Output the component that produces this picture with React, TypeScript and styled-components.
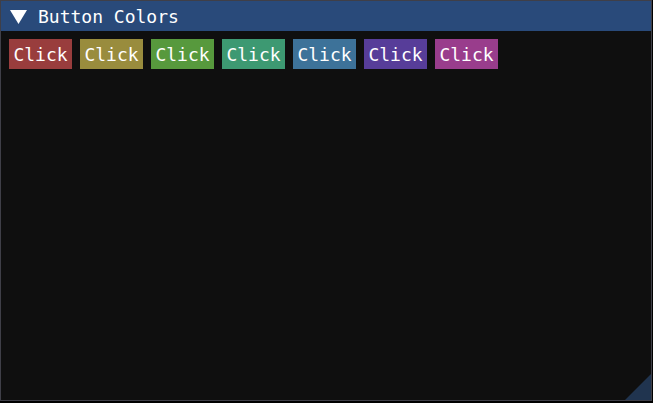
import React from "react";
import styled, { createGlobalStyle } from "styled-components";

const Global = createGlobalStyle`
  html, body { margin: 0; padding: 0; background: #000; }
  body { width: 653px; height: 403px; overflow: hidden; }
`;

const Window = styled.div`
  position: relative;
  box-sizing: border-box;
  width: 652px;
  height: 401px;
  background: #0f0f0f;
  border: 1px solid #3f3f48;
  display: flex;
  flex-direction: column;
  font-family: "DejaVu Sans Mono", "Liberation Mono", monospace;
  font-size: 18px;
  color: #ffffff;
`;

const TitleBar = styled.div`
  height: 30px;
  background: #294a7a;
  display: flex;
  align-items: center;
  padding-left: 9px;
  gap: 11px;
  flex-shrink: 0;
`;

const Arrow = styled.svg`
  width: 17px;
  height: 14px;
  display: block;
  margin-top: 1px;
`;

const Title = styled.span`
  line-height: 30px;
  padding-top: 2px;
  white-space: pre;
`;

const Content = styled.div`
  display: flex;
  gap: 8px;
  padding: 8px 8px;
`;

const ColorButton = styled.div<{ $bg: string }>`
  width: 63px;
  height: 30px;
  background: ${(p) => p.$bg};
  display: flex;
  align-items: center;
  justify-content: center;
  line-height: 30px;
  padding-top: 2px;
  box-sizing: border-box;
`;

const Grip = styled.svg`
  position: absolute;
  right: 0;
  bottom: 0;
  width: 26px;
  height: 26px;
  display: block;
`;

const colors = ["#993d3d", "#998c3d", "#57993d", "#3d9972", "#3d7299", "#573d99", "#993d8c"];

export default function App() {
  return (
    <>
      <Global />
      <Window>
        <TitleBar>
          <Arrow viewBox="0 0 17 14">
            <polygon points="0,0 17,0 8.5,14" fill="#ffffff" />
          </Arrow>
          <Title>Button Colors</Title>
        </TitleBar>
        <Content>
          {colors.map((c, i) => (
            <ColorButton key={i} $bg={c}>Click</ColorButton>
          ))}
        </Content>
        <Grip viewBox="0 0 26 26">
          <polygon points="26,0 26,26 0,26" fill="#20344f" />
        </Grip>
      </Window>
    </>
  );
}
